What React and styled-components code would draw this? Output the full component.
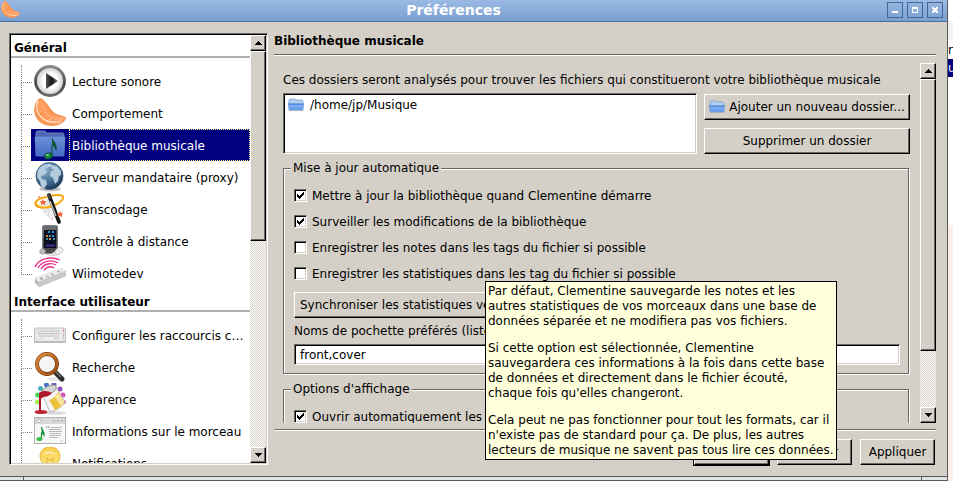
// src/App.jsx
import React, { useState } from 'react';
import styled, { createGlobalStyle, css } from 'styled-components';

const GlobalStyle = createGlobalStyle`
  * {
    box-sizing: border-box;
  }

  body {
    margin: 0;
    overflow: hidden;
    background: #ffffff;
  }

  body, button, input {
    font-family: 'DejaVu Sans', sans-serif;
    font-size: 12px;
    line-height: 16px;
    color: #000000;
  }
`;

const raised = css`
  border: 1px solid;
  border-color: #ffffff #000000 #000000 #ffffff;
  box-shadow: inset -1px -1px 0 #6a6864;
`;

const sunken = css`
  border: 1px solid;
  border-color: #6a6864 #ffffff #ffffff #6a6864;
  box-shadow: inset 1px 1px 0 #000000, inset -1px -1px 0 #d4d0c8;
`;

const Desktop = styled.div`
  display: flex;
  height: 100vh;
`;

const Window = styled.div`
  position: relative;
  flex: 1;
  min-width: 0;
  display: flex;
  flex-direction: column;
  background: #d4d0c8;
  border-right: 1px solid #55585c;
`;

const TitleBar = styled.header`
  display: flex;
  align-items: center;
  flex: none;
  height: 22px;
  padding: 0 4px 2px 0;
  gap: 4px;
  background: linear-gradient(#9abae4, #799fcf);
  border-bottom: 1px solid #4371a9;
`;

const AppIcon = styled.span`
  display: flex;
  width: 20px;
  padding-left: 1px;
`;

const WindowTitle = styled.h1`
  flex: 1;
  margin: 0;
  font-size: 14px;
  line-height: 18px;
  font-weight: bold;
  text-align: center;
  color: #ffffff;
`;

const WindowButton = styled.button`
  display: flex;
  align-items: center;
  justify-content: center;
  width: 16px;
  height: 16px;
  padding: 0;
  background: linear-gradient(#95b5df, #7fa4d3);
  border: 1px solid #44679a;
`;

const Body = styled.div`
  flex: 1;
  min-height: 0;
  display: flex;
  gap: 6px;
  padding: 11px 11px 11px 9px;
`;

const FrameBottom = styled.div`
  flex: none;
  display: flex;
  justify-content: space-between;
  height: 5px;
  padding: 0 25px 0 23px;
  background: #dfe1e4;
  border-top: 1px solid #55585c;
  border-bottom: 1px solid #55585c;
`;

const FrameGrip = styled.span`
  width: 1px;
  background: #55585c;
`;

const Tree = styled.nav`
  ${sunken}
  display: flex;
  flex: none;
  width: 259px;
  padding: 1px;
  background: #ffffff;
`;

const TreeList = styled.div`
  flex: 1;
  min-width: 0;
  overflow: hidden;
`;

const TreeHeading = styled.h2`
  height: 23px;
  margin: 0 0 7px;
  padding: 5px 0 0 3px;
  font-size: 12px;
  line-height: 16px;
  border-bottom: 2px solid #b0b0b0;
`;

const TreeGroup = styled.ul`
  list-style: none;
  margin: 0;
  padding: 0 0 0 10px;
`;

const TreeItem = styled.li`
  display: flex;
  align-items: stretch;
  height: 32px;
`;

const Branch = styled.span`
  flex: none;
  width: 10px;

  &::before {
    content: '';
    display: block;
    width: 10px;
    height: 17px;
    border-left: 1px dotted #808080;
    border-bottom: 1px dotted #808080;
  }

  &::after {
    content: '';
    display: ${(props) => (props.$last ? 'none' : 'block')};
    height: 15px;
    border-left: 1px dotted #808080;
  }
`;

const TreeLink = styled.a`
  flex: 1;
  min-width: 0;
  display: flex;
  align-items: stretch;
  padding-left: 3px;
  color: ${(props) => (props.$selected ? '#ffffff' : '#000000')};
  background: ${(props) => (props.$selected ? '#000080' : 'transparent')};
  text-decoration: none;
  white-space: nowrap;

  svg {
    flex: none;
    margin-right: 3px;
  }
`;

const TreeLabel = styled.span`
  flex: 1;
  padding: 8px 2px 6px;
  border: 1px dotted ${(props) => (props.$selected ? '#ffff7f' : 'transparent')};
`;

const ScrollColumn = styled.div`
  flex: none;
  display: flex;
  flex-direction: column;
  width: 16px;
  background: repeating-conic-gradient(#d4d0c8 0 25%, #ffffff 0 50%) 0 0 / 2px 2px;
`;

const ScrollButton = styled.button`
  ${raised}
  flex: none;
  display: flex;
  align-items: center;
  justify-content: center;
  height: 16px;
  padding: 0;
  background: #d4d0c8;
`;

const ScrollTrack = styled.div`
  flex: 1;
`;

const ScrollThumb = styled.div`
  ${raised}
  height: ${(props) => props.$size};
  background: #d4d0c8;
`;

const Main = styled.main`
  flex: 1;
  min-width: 0;
  display: flex;
  flex-direction: column;
`;

const PageTitle = styled.h2`
  margin: 0 0 5px;
  font-size: 12px;
  line-height: 16px;
`;

const Separator = styled.hr`
  flex: none;
  width: 100%;
  height: 2px;
  margin: 0;
  border: 0;
  border-top: 1px solid #6a6864;
  background: #ffffff;
`;

const ScrollArea = styled.div`
  flex: 1;
  min-height: 0;
  display: flex;
  margin: 7px 0 6px;
`;

const Settings = styled.div`
  flex: 1;
  min-width: 0;
  overflow: hidden;
  padding: 9px 10px 0 9px;
`;

const Intro = styled.p`
  margin: 0 0 5px;
  white-space: nowrap;
`;

const FolderArea = styled.div`
  display: flex;
  align-items: flex-end;
  gap: 7px;
  margin-bottom: 6px;
`;

const FolderList = styled.ul`
  ${sunken}
  flex: 1;
  height: 61px;
  margin: 0;
  padding: 3px 4px;
  list-style: none;
  background: #ffffff;
`;

const Folder = styled.li`
  display: flex;
  align-items: center;
  gap: 6px;
`;

const FolderActions = styled.div`
  display: flex;
  flex-direction: column;
  gap: 8px;
  width: 206px;
`;

const Button = styled.button`
  ${raised}
  display: flex;
  align-items: center;
  justify-content: center;
  gap: 4px;
  height: 26px;
  padding: 0 5px;
  background: #d4d0c8;
  white-space: nowrap;

  svg {
    flex: none;
  }
`;

const DialogButton = styled(Button)`
  width: 75px;
  outline: ${(props) => (props.$default ? '1px solid #000000' : 'none')};
`;

const Group = styled.fieldset`
  min-width: 0;
  margin: 0 1px 7px 0;
  padding: 12px 8px 8px 10px;
  border: 1px solid #6a6864;
  box-shadow: inset 1px 1px 0 #ffffff, 1px 1px 0 #ffffff;
`;

const Legend = styled.legend`
  padding: 0 2px;
  margin-left: -3px;
  background: #d4d0c8;
`;

const CheckLabel = styled.label`
  display: flex;
  align-items: flex-start;
  gap: 5px;
  margin-bottom: 10px;
  white-space: nowrap;
`;

const CheckBox = styled.span`
  display: grid;
  place-items: center;
  width: 13px;
  height: 13px;
  margin-top: 1px;

  > * {
    grid-area: 1 / 1;
  }

  svg {
    pointer-events: none;
  }
`;

const CheckInput = styled.input`
  ${sunken}
  appearance: none;
  width: 13px;
  height: 13px;
  margin: 0;
  background: #ffffff;
`;

const FieldLabel = styled.label`
  display: block;
  margin: 5px 0;
  white-space: nowrap;
`;

const TextField = styled.input`
  ${sunken}
  display: block;
  width: 100%;
  height: 21px;
  padding: 0 5px;
  background: #ffffff;
`;

const DialogButtons = styled.footer`
  flex: none;
  display: flex;
  justify-content: flex-end;
  gap: 8px;
  padding: 8px 1px 0 0;
`;

const Tooltip = styled.div`
  position: absolute;
  left: 485px;
  top: 281px;
  width: 352px;
  padding: 2px 2px 1px;
  line-height: 15px;
  white-space: nowrap;
  background: #ffffdc;
  border: 1px solid #000000;

  p {
    margin: 0;
  }

  p + p {
    margin-top: 12px;
  }
`;

const Behind = styled.aside`
  flex: none;
  display: flex;
  flex-direction: column;
  width: 5px;
  overflow: hidden;
  background: linear-gradient(#ffffff 21px, #f2f2f2 21px 40px, #ffffff 40px 225px, #fdeee8 225px);
`;

const BehindRow = styled.span`
  flex: none;
  height: 18px;
  line-height: 18px;
  color: ${(props) => (props.$selected ? '#ffffff' : '#000000')};
  background: ${(props) => (props.$selected ? '#000080' : 'transparent')};

  &:first-child {
    margin-top: 41px;
  }
`;

/* icons */

const Segment = ({ size = 32 }) => (
  <svg width={size} height={size} viewBox="0 0 32 32">
    <defs>
      <linearGradient id="peel" x1="0" y1="0" x2="1" y2="1">
        <stop offset="0" stopColor="#ffa25c" />
        <stop offset="0.5" stopColor="#ff9450" />
        <stop offset="1" stopColor="#ffb07c" />
      </linearGradient>
    </defs>
    <path d="M6 1C2 3 0 9 0 14c1 9 8 15 18 15 6 0 13-3 14-8-1-3-7-2-11-5C15 12 12 2 6 1z" fill="#f6985a" />
    <path d="M6 2C2 5 1 10 2 14c2 8 9 12 17 12 5 0 10-1 12-5-3-1-8-1-12-4C14 13 11 4 6 2z" fill="url(#peel)" />
    <path d="M4 4C2 10 3 16 7 20c5 5 12 6 20 5" fill="none" stroke="#ffe0c8" strokeWidth="1.200" />
    <path d="M7 5l4 6M6 9l7 5M6 14l9 3M9 19l9 0M14 23l7-3M20 24l4-4M26 24l2-3" stroke="#ffc49c" strokeWidth="0.7" />
  </svg>
);

const PlayIcon = () => (
  <svg width="32" height="32" viewBox="0 0 32 32">
    <defs>
      <radialGradient id="dial">
        <stop offset="0.5" stopColor="#ffffff" />
        <stop offset="1" stopColor="#c9c9c9" />
      </radialGradient>
      <linearGradient id="ring" x1="0" y1="0" x2="0" y2="1">
        <stop offset="0" stopColor="#8b8b8b" />
        <stop offset="0.6" stopColor="#454545" />
        <stop offset="1" stopColor="#6a6a6a" />
      </linearGradient>
      <linearGradient id="arrow" x1="0" y1="0" x2="1" y2="0">
        <stop offset="0" stopColor="#555555" />
        <stop offset="0.5" stopColor="#151515" />
        <stop offset="1" stopColor="#777777" />
      </linearGradient>
    </defs>
    <circle cx="16" cy="16" r="14.5" fill="url(#dial)" stroke="url(#ring)" strokeWidth="2.8" />
    <path d="M12 8l12 8-12 8z" fill="url(#arrow)" />
  </svg>
);

const MusicFolderIcon = () => (
  <svg width="32" height="32" viewBox="0 0 32 32">
    <defs>
      <linearGradient id="folder" x1="0" y1="0" x2="0" y2="1">
        <stop offset="0" stopColor="#6d8fd6" />
        <stop offset="1" stopColor="#426bc4" />
      </linearGradient>
    </defs>
    <path d="M2 13V4l1-2h8l2 2h16l1 2v7z" fill="#5068b4" stroke="#7d90cc" strokeWidth="0.8" />
    <path d="M1 8h30l-1 19H2z" fill="url(#folder)" stroke="#6c8fdc" strokeWidth="0.6" />
    <path d="M18 9c1 4 5 5 4 12-1-4-3-5-4-5v10" fill="#0c5c34" stroke="#0a4c30" strokeWidth="1" />
    <ellipse cx="14.500" cy="27" rx="4" ry="2.800" fill="#16823a" stroke="#0a4c30" transform="rotate(-15 14.500 27)" />
    <ellipse cx="13.500" cy="26" rx="1.600" ry="0.900" fill="#7fd68d" />
  </svg>
);

const GlobeIcon = () => (
  <svg width="32" height="32" viewBox="0 0 32 32">
    <defs>
      <radialGradient id="sea" cx="0.35" cy="0.25" r="0.8">
        <stop offset="0" stopColor="#8fb0cc" />
        <stop offset="0.6" stopColor="#456f96" />
        <stop offset="1" stopColor="#16324f" />
      </radialGradient>
    </defs>
    <ellipse cx="16" cy="28" rx="11" ry="2.500" fill="#c4c4c4" />
    <circle cx="15.500" cy="15" r="13.500" fill="url(#sea)" stroke="#2f5273" strokeWidth="0.8" />
    <path d="M4 9c3-4 6-6 10-6l1 3-4 2 2 3-3 3-3 1 1 3 4 1 1 4-3 5-3-3-1-5-3-4z" fill="#b4cbdd" />
    <path d="M17 4l6 1 4 5v4l-2 1-1 5-3 3-2-6-3-2 1-5 3-1-3-2z" fill="#b4cbdd" />
    <path d="M14 3l4 1-3 2z" fill="#dfeaf3" />
  </svg>
);

const WandIcon = () => (
  <svg width="32" height="32" viewBox="0 0 32 32">
    <path d="M15 4L6 15l4 6 5 4 9 1z" fill="#e9e9e9" opacity="0.8" />
    <path d="M14 6L8 16M15 8l-4 12M16 10l-2 13" stroke="#cfcfcf" strokeWidth="0.8" />
    <path d="M13 4C4 5 0 9 2 12c3 4 14 3 21-1 8-5 8-9 1-9-3 0-5 0-7 1" fill="none" stroke="#f9a413" strokeWidth="2.200" />
    <path d="M3 11c4 4 13 3 20-1 4-2 6-4 6-6" fill="none" stroke="#ffd34d" strokeWidth="0.9" />
    <path d="M15 2l10 27" stroke="#111111" strokeWidth="3.600" strokeLinecap="round" />
    <path d="M16 8l6 15" stroke="#bdbdbd" strokeWidth="1.400" />
    <path d="M14 1l2 5" stroke="#444444" strokeWidth="3" />
    <path d="M9 6l1 2 2 0-1 2 0 2-2-1-2 1 0-2-1-2 2 0z" fill="#ef6a3c" />
    <path d="M26 18l1 2 2 0-1 2 0 2-2-1-2 1 0-2-1-2 2 0z" fill="#ef6a3c" />
    <circle cx="5" cy="4" r="1" fill="#f3906c" />
    <path d="M18 25l1 2-2 0z" fill="#f3906c" />
  </svg>
);

const PhoneIcon = () => (
  <svg width="32" height="32" viewBox="0 0 32 32">
    <rect x="8.500" y="0.500" width="15" height="28" rx="1.500" fill="#48484a" stroke="#77777a" strokeWidth="0.8" />
    <path d="M9 1h14v3L9 14z" fill="#6b6b6e" />
    <rect x="10" y="5" width="12" height="18" fill="#0b1020" />
    <path d="M14 7h2M18 7h2M18 11h2" stroke="#2f8ed8" strokeWidth="2" />
    <path d="M12 11h2M15 14h2" stroke="#d98432" strokeWidth="2" />
    <path d="M15 11h2M12 14h2M19 14h2" stroke="#2f8f9c" strokeWidth="2" />
    <path d="M12 20.500h9" stroke="#4a2c98" strokeWidth="2" />
    <circle cx="8.500" cy="26.500" r="2.800" fill="#b9b9b9" stroke="#999999" strokeWidth="0.7" />
    <path d="M12 29c4 2 7 2 11 1" fill="none" stroke="#c4c4c4" />
    <ellipse cx="25" cy="26" rx="4.500" ry="3" fill="#ededed" stroke="#c4c4c4" strokeWidth="0.8" transform="rotate(-40 25 26)" />
    <circle cx="20" cy="29" r="2" fill="#dddddd" />
  </svg>
);

const WiimoteIcon = () => (
  <svg width="32" height="32" viewBox="0 0 32 32">
    <g fill="none" stroke="#e9308c" strokeWidth="1.300">
      <path d="M1 10C5 1 17-1 26 3" />
      <path d="M4 11C8 4 17 2 24 6" />
      <path d="M7 12c3-5 10-7 15-4" />
      <path d="M10 13c3-3 7-4 10-2" />
    </g>
    <path d="M1 21l27-10 4 3v5L5 30l-4-4z" fill="#b5b5b5" />
    <path d="M1 21l27-10 4 3L4 25z" fill="#eaeaea" />
    <path d="M4 25L32 14v5L5 30z" fill="#c9c9c9" />
    <path d="M6 21l3 1M8 20l-1 3M12 19l3 1M17 17l3 1M23 14l3 1" stroke="#9b9b9b" strokeWidth="1" />
  </svg>
);

const KeyboardIcon = () => (
  <svg width="32" height="32" viewBox="0 0 32 32">
    <rect x="0.500" y="9" width="31" height="14" rx="1" fill="#e9e9e9" stroke="#bdbdbd" />
    <path d="M0 23h32" stroke="#9f9f9f" />
    <path d="M4 12h22M4 14.500h22M5 17h20M7 19.500h17" stroke="#b2b2b2" strokeWidth="1.200" strokeDasharray="1.500 0.700" />
    <path d="M8 19.500h12" stroke="#fbfbfb" />
    <path d="M29.500 10.500v2" stroke="#d46464" />
    <path d="M29.500 14v6" stroke="#c7c7c7" />
  </svg>
);

const SearchIcon = () => (
  <svg width="32" height="32" viewBox="0 0 32 32">
    <defs>
      <linearGradient id="rim" x1="0" y1="0" x2="1" y2="1">
        <stop offset="0" stopColor="#e39040" />
        <stop offset="1" stopColor="#9a4a10" />
      </linearGradient>
    </defs>
    <ellipse cx="22" cy="28" rx="9" ry="2" fill="#e6e6e6" />
    <path d="M20 20l8 8" stroke="#2b2b28" strokeWidth="5" strokeLinecap="round" />
    <path d="M21 20l6 6" stroke="#75756c" strokeWidth="1.500" />
    <circle cx="13" cy="13" r="10" fill="#f4f4f4" stroke="#7b3b0a" strokeWidth="3.800" />
    <circle cx="13" cy="13" r="10" fill="none" stroke="url(#rim)" strokeWidth="2.600" />
    <path d="M6 12c1-4 5-6 9-5-4 1-7 3-9 5z" fill="#ffffff" />
  </svg>
);

const PaintIcon = () => (
  <svg width="32" height="32" viewBox="0 0 32 32">
    <circle cx="6.500" cy="5.500" r="2.500" fill="#49aeb8" />
    <circle cx="12.500" cy="2" r="2.500" fill="#4970d0" />
    <circle cx="20" cy="1.500" r="2.500" fill="#6c59c4" />
    <circle cx="26" cy="6" r="2.500" fill="#9350bd" />
    <circle cx="29" cy="12" r="2.500" fill="#d850bc" />
    <circle cx="30" cy="19" r="2" fill="#ef6c84" />
    <circle cx="3.500" cy="12" r="2.500" fill="#4cd654" />
    <circle cx="3.500" cy="19" r="2.500" fill="#a5f04a" />
    <ellipse cx="21" cy="30" rx="11" ry="1.800" fill="#dadada" />
    <path d="M8 11L22 4l9 15c-3 5-9 9-15 10z" fill="#f4f4f4" stroke="#a6a6a6" strokeWidth="0.8" />
    <path d="M15 17c4-1 7-4 9-8l6 10c-2 4-5 6-9 8z" fill="#ecc03a" />
    <path d="M21 14l3-4 6 9-3 4z" fill="#fae59a" />
    <ellipse cx="15" cy="7" rx="8" ry="4" fill="#d4d4d4" stroke="#8a8a8a" strokeWidth="0.8" transform="rotate(-27 15 7)" />
    <path d="M5 10c4-3 9-2 13 0-3 3-6 4-9 4l-2 2v12H5z" fill="#b0172a" />
    <ellipse cx="7" cy="29" rx="6.500" ry="2" fill="#c22536" />
  </svg>
);

const SongInfoIcon = () => (
  <svg width="32" height="32" viewBox="0 0 32 32">
    <rect x="0.500" y="2.500" width="31" height="26" fill="#f8f8f8" stroke="#b0b0b0" />
    <rect x="1" y="3" width="30" height="6" fill="#d9d9d9" />
    <circle cx="5" cy="6" r="1.800" fill="#f4f4f4" stroke="#b0b0b0" strokeWidth="0.700" />
    <path d="M19 6h2M23 6h2M27 6h2" stroke="#bcbcbc" strokeWidth="2" />
    <path d="M7.500 12c0 3 3 4 2.500 8-1-2-2.500-2-2.500-2v6" fill="#1da43b" stroke="#128a30" strokeWidth="1.200" />
    <ellipse cx="5.500" cy="24" rx="3" ry="2" fill="#2fc04b" />
    <path d="M12 13l1-2M14 13l1-2" stroke="#9a9a9a" />
    <path d="M17 12.500h11M15 14.500h12M15 16.500h13M16 18.500h11M15 20.500h12M15 22.500h9" stroke="#b0b0b0" strokeWidth="0.900" />
    <path d="M26 26h3" stroke="#cfcfcf" />
  </svg>
);

const BulbIcon = () => (
  <svg width="32" height="32" viewBox="0 0 32 32">
    <defs>
      <linearGradient id="bulb" x1="0" y1="0" x2="0" y2="1">
        <stop offset="0" stopColor="#f8cf4a" />
        <stop offset="1" stopColor="#fde98c" />
      </linearGradient>
    </defs>
    <path d="M16 0C9 0 6 5 6 9c0 6 6 9 6 15h8c0-6 6-9 6-15 0-4-3-9-10-9z" fill="url(#bulb)" stroke="#e5b93c" />
    <path d="M9 8c3-5 10-5 14 0-5-2-9-2-14 0z" fill="#fdeca8" />
    <path d="M13 20V11l3 3 3-3v9" fill="none" stroke="#dfae35" />
  </svg>
);

const FolderIcon = () => (
  <svg width="16" height="16" viewBox="0 0 16 16">
    <path d="M1 13V3l1-1h5l1 1h6l1 1v9z" fill="#b3cdf0" stroke="#7ba3da" strokeWidth="0.800" />
    <path d="M0 7h16l-1 6H1z" fill="#6ba1ea" />
    <path d="M0 7h16" stroke="#3e7ccd" />
    <path d="M1 9h14" stroke="#8fbaf3" />
    <path d="M1 13.500h14" stroke="#a5aebb" />
  </svg>
);

const Arrow = ({ down }) => (
  <svg width="7" height="4" viewBox="0 0 7 4" shapeRendering="crispEdges">
    <path d={down ? 'M0 0h7L3.500 4z' : 'M0 4h7L3.500 0z'} fill="#000000" />
  </svg>
);

const CheckMark = () => (
  <svg width="9" height="9" viewBox="0 0 9 9" shapeRendering="crispEdges">
    <path d="M1 3h1v1h1v1h1v-1h1v-1h1v-1h1v-1h1v3h-1v1h-1v1h-1v1h-1v1h-1v-1h-1v-1h-1z" fill="#000000" />
  </svg>
);

const treeGroups = [
  {
    title: 'Général',
    items: [
      { label: 'Lecture sonore', icon: PlayIcon },
      { label: 'Comportement', icon: Segment },
      { label: 'Bibliothèque musicale', icon: MusicFolderIcon },
      { label: 'Serveur mandataire (proxy)', icon: GlobeIcon },
      { label: 'Transcodage', icon: WandIcon },
      { label: 'Contrôle à distance', icon: PhoneIcon },
      { label: 'Wiimotedev', icon: WiimoteIcon },
    ],
  },
  {
    title: 'Interface utilisateur',
    items: [
      { label: 'Configurer les raccourcis c…', icon: KeyboardIcon },
      { label: 'Recherche', icon: SearchIcon },
      { label: 'Apparence', icon: PaintIcon },
      { label: 'Informations sur le morceau', icon: SongInfoIcon },
      { label: 'Notifications', icon: BulbIcon },
    ],
  },
];

const ScrollBar = ({ size }) => (
  <ScrollColumn>
    <ScrollButton type="button" aria-label="Monter">
      <Arrow />
    </ScrollButton>
    <ScrollTrack>
      <ScrollThumb $size={size} />
    </ScrollTrack>
    <ScrollButton type="button" aria-label="Descendre">
      <Arrow down />
    </ScrollButton>
  </ScrollColumn>
);

const CheckOption = ({ label, defaultChecked = false }) => {
  const [checked, setChecked] = useState(defaultChecked);

  return (
    <CheckLabel>
      <CheckBox>
        <CheckInput
          type="checkbox"
          checked={checked}
          onChange={(e) => setChecked(e.target.checked)}
        />
        {checked && <CheckMark />}
      </CheckBox>
      {label}
    </CheckLabel>
  );
};

const App = () => {
  const [selected, setSelected] = useState('Bibliothèque musicale');
  const [covers, setCovers] = useState('front,cover');

  return (
    <>
      <GlobalStyle />
      <Desktop>
        <Window>
          <TitleBar>
            <AppIcon>
              <Segment size={20} />
            </AppIcon>
            <WindowTitle>Préférences</WindowTitle>
            <WindowButton type="button" aria-label="Réduire">
              <svg width="8" height="8" viewBox="0 0 8 8" shapeRendering="crispEdges">
                <path d="M1 5h6v2H1z" fill="#ffffff" />
              </svg>
            </WindowButton>
            <WindowButton type="button" aria-label="Agrandir">
              <svg width="8" height="8" viewBox="0 0 8 8" shapeRendering="crispEdges">
                <path d="M1 1h6v6H1zM2 3v3h4V3z" fill="#ffffff" fillRule="evenodd" />
              </svg>
            </WindowButton>
            <WindowButton type="button" aria-label="Fermer">
              <svg width="8" height="8" viewBox="0 0 8 8" shapeRendering="crispEdges">
                <path d="M1 1h2v1h2V1h2v2H6v2h1v2H5V6H3v1H1V5h1V3H1z" fill="#ffffff" />
              </svg>
            </WindowButton>
          </TitleBar>

          <Body>
            <Tree>
              <TreeList>
                {treeGroups.map((group) => (
                  <React.Fragment key={group.title}>
                    <TreeHeading>{group.title}</TreeHeading>
                    <TreeGroup>
                      {group.items.map(({ label, icon: Icon }, i) => (
                        <TreeItem key={label}>
                          <Branch $last={i === group.items.length - 1} />
                          <TreeLink
                            href="#"
                            $selected={label === selected}
                            onClick={() => setSelected(label)}
                          >
                            <Icon />
                            <TreeLabel $selected={label === selected}>{label}</TreeLabel>
                          </TreeLink>
                        </TreeItem>
                      ))}
                    </TreeGroup>
                  </React.Fragment>
                ))}
              </TreeList>
              <ScrollBar size="48%" />
            </Tree>

            <Main>
              <PageTitle>Bibliothèque musicale</PageTitle>
              <Separator />
              <ScrollArea>
                <Settings>
                  <Intro>
                    Ces dossiers seront analysés pour trouver les fichiers qui constitueront votre bibliothèque musicale
                  </Intro>
                  <FolderArea>
                    <FolderList>
                      <Folder>
                        <FolderIcon />
                        /home/jp/Musique
                      </Folder>
                    </FolderList>
                    <FolderActions>
                      <Button type="button">
                        <FolderIcon />
                        Ajouter un nouveau dossier...
                      </Button>
                      <Button type="button">Supprimer un dossier</Button>
                    </FolderActions>
                  </FolderArea>

                  <Group>
                    <Legend>Mise à jour automatique</Legend>
                    <CheckOption label="Mettre à jour la bibliothèque quand Clementine démarre" defaultChecked />
                    <CheckOption label="Surveiller les modifications de la bibliothèque" defaultChecked />
                    <CheckOption label="Enregistrer les notes dans les tags du fichier si possible" />
                    <CheckOption label="Enregistrer les statistiques dans les tag du fichier si possible" />
                    <Button type="button">Synchroniser les statistiques vers les fichiers</Button>
                    <FieldLabel htmlFor="covers">Noms de pochette préférés (liste séparée par des virgules)</FieldLabel>
                    <TextField id="covers" value={covers} onChange={(e) => setCovers(e.target.value)} />
                  </Group>

                  <Group>
                    <Legend>Options d'affichage</Legend>
                    <CheckOption label="Ouvrir automatiquement les catégories" defaultChecked />
                  </Group>
                </Settings>
                <ScrollBar size="83%" />
              </ScrollArea>
              <Separator />
              <DialogButtons>
                <DialogButton type="button" $default>OK</DialogButton>
                <DialogButton type="button">Annuler</DialogButton>
                <DialogButton type="button">Appliquer</DialogButton>
              </DialogButtons>
            </Main>
          </Body>

          <FrameBottom>
            <FrameGrip />
            <FrameGrip />
          </FrameBottom>

          <Tooltip role="tooltip">
            <p>
              Par défaut, Clementine sauvegarde les notes et les<br />
              autres statistiques de vos morceaux dans une base de<br />
              données séparée et ne modifiera pas vos fichiers.
            </p>
            <p>
              Si cette option est sélectionnée, Clementine<br />
              sauvegardera ces informations à la fois dans cette base<br />
              de données et directement dans le fichier écouté,<br />
              chaque fois qu'elles changeront.
            </p>
            <p>
              Cela peut ne pas fonctionner pour tout les formats, car il<br />
              n'existe pas de standard pour ça. De plus, les autres<br />
              lecteurs de musique ne savent pas tous lire ces données.
            </p>
          </Tooltip>
        </Window>
        <Behind>
          <BehindRow>n</BehindRow>
          <BehindRow $selected>u</BehindRow>
        </Behind>
      </Desktop>
    </>
  );
};

export default App;
